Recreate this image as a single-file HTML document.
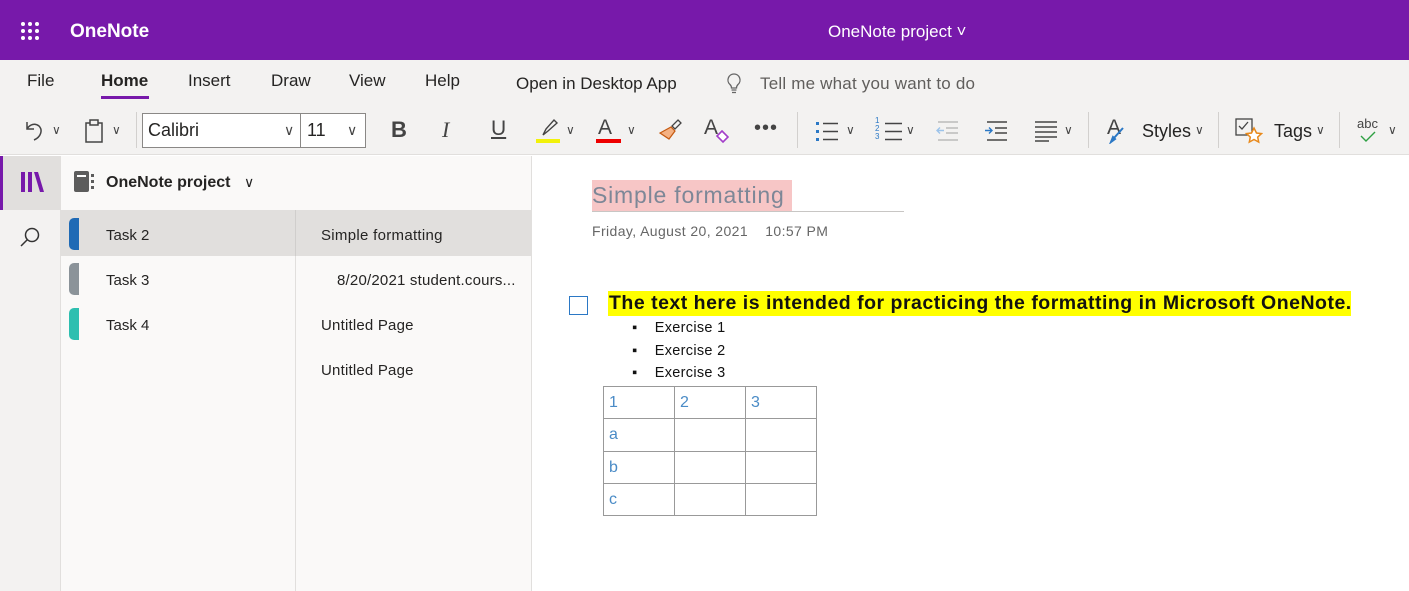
<!DOCTYPE html>
<html><head><meta charset="utf-8"><style>
*{margin:0;padding:0;box-sizing:border-box}
body{width:1409px;height:591px;overflow:hidden;font-family:"Liberation Sans",sans-serif;background:#fff;position:relative;color:#252423}
.a{position:absolute}
#hdr{left:0;top:0;width:1409px;height:60px;background:#7719aa;color:#fff}
#rib{left:0;top:60px;width:1409px;height:95px;background:#f3f2f1;border-bottom:1px solid #e1dfdd}
.tab{position:absolute;top:71px;font-size:17px;color:#252423}
.ic{position:absolute}
.sep{position:absolute;top:112px;width:1px;height:36px;background:#d2d0ce}
.chev{position:absolute;font-size:12px;color:#444}
</style></head><body>
<div id="hdr" class="a">
 <svg class="a" style="left:20px;top:21px" width="20" height="20"><g fill="#fff"><circle cx="3" cy="3" r="2"/><circle cx="10" cy="3" r="2"/><circle cx="17" cy="3" r="2"/><circle cx="3" cy="10" r="2"/><circle cx="10" cy="10" r="2"/><circle cx="17" cy="10" r="2"/><circle cx="3" cy="17" r="2"/><circle cx="10" cy="17" r="2"/><circle cx="17" cy="17" r="2"/></g></svg>
 <div class="a" style="left:70px;top:21px;font-size:19px;font-weight:bold">OneNote</div>
 <div class="a" style="left:828px;top:22px;font-size:17px">OneNote project ˅</div>
</div>
<div id="rib" class="a"></div>
<div class="tab" style="left:27px">File</div>
<div class="tab" style="left:101px;font-weight:bold">Home</div>
<div class="a" style="left:101px;top:96px;width:48px;height:3px;background:#7719aa"></div>
<div class="tab" style="left:188px">Insert</div>
<div class="tab" style="left:271px">Draw</div>
<div class="tab" style="left:349px">View</div>
<div class="tab" style="left:425px">Help</div>
<div class="tab" style="left:516px;top:74px">Open in Desktop App</div>
<svg class="ic" style="left:725px;top:72px" width="18" height="22"><path d="M9 2a6 6 0 0 0-4 10.5c1 1 1.5 2 1.5 3.5h5c0-1.5.5-2.5 1.5-3.5A6 6 0 0 0 9 2zM6.5 18h5M7 20.5h4" fill="none" stroke="#666" stroke-width="1.3"/></svg>
<div class="tab" style="left:760px;top:74px;color:#605e5c;letter-spacing:0.2px">Tell me what you want to do</div>
<svg class="ic" style="left:22px;top:118px" width="26" height="26"><path d="M5 4v7h7M5 11C8 6 13 5 17 8c4 4 2 11-5 14" fill="none" stroke="#444" stroke-width="1.5"/></svg>
<div class="chev" style="left:52px;top:123px">∨</div>
<svg class="ic" style="left:84px;top:118px" width="22" height="26"><rect x="2" y="5" width="16" height="19" fill="none" stroke="#444" stroke-width="1.5"/><rect x="6" y="2" width="8" height="5" fill="#f3f2f1" stroke="#444" stroke-width="1.5"/></svg>
<div class="chev" style="left:112px;top:123px">∨</div>
<div class="sep" style="left:136px"></div>
<div class="a" style="left:142px;top:113px;width:224px;height:35px;background:#fff;border:1px solid #8a8886"></div>
<div class="a" style="left:300px;top:113px;width:1px;height:35px;background:#8a8886"></div>
<div class="a" style="left:148px;top:120px;font-size:18px">Calibri</div>
<div class="chev" style="left:284px;top:122px;font-size:14px">∨</div>
<div class="a" style="left:307px;top:120px;font-size:18px">11</div>
<div class="chev" style="left:347px;top:122px;font-size:14px">∨</div>
<div class="a" style="left:391px;top:117px;font-size:22px;font-weight:bold;color:#444">B</div>
<div class="a" style="left:442px;top:117px;font-size:22px;font-style:italic;font-family:'Liberation Serif';color:#444">I</div>
<div class="a" style="left:491px;top:117px;font-size:21px;text-decoration:underline;color:#444">U</div>
<svg class="ic" style="left:535px;top:116px" width="28" height="28"><path d="M8 19l3-6 8-9 3 3-9 8z" fill="none" stroke="#444" stroke-width="1.4"/><rect x="1" y="23" width="24" height="4" fill="#f2f20a"/></svg>
<div class="chev" style="left:566px;top:123px">∨</div>
<div class="a" style="left:598px;top:116px;font-size:21px;color:#444">A</div>
<div class="a" style="left:596px;top:139px;width:25px;height:4px;background:#e00"></div>
<div class="chev" style="left:627px;top:123px">∨</div>
<svg class="ic" style="left:658px;top:118px" width="26" height="24"><path d="M20 2l3 3-6 6-3-3z" fill="none" stroke="#444" stroke-width="1.3"/><path d="M13 9l4 4-6 8-9-6z" fill="#f4b183" stroke="#c55a11" stroke-width="1.2"/></svg>
<div class="a" style="left:704px;top:116px;font-size:21px;color:#444">A</div>
<svg class="ic" style="left:715px;top:130px" width="14" height="14"><path d="M7 1l6 6-5 5-6-6z" fill="#fff" stroke="#a33ec9" stroke-width="1.6"/></svg>
<div class="a" style="left:754px;top:117px;font-size:20px;color:#444;letter-spacing:1px">•••</div>
<div class="sep" style="left:797px"></div>
<svg class="ic" style="left:815px;top:119px" width="26" height="24"><g fill="#2b78c5"><rect x="1" y="3" width="3" height="3"/><rect x="1" y="11" width="3" height="3"/><rect x="1" y="19" width="3" height="3"/></g><path d="M8 4.5h15M8 12.5h15M8 20.5h15" stroke="#444" stroke-width="1.4"/></svg>
<div class="chev" style="left:846px;top:123px">∨</div>
<div class="a" style="left:875px;top:117px;font-size:8px;line-height:8px;color:#2b78c5">1<br>2<br>3</div>
<svg class="ic" style="left:884px;top:119px" width="20" height="24"><path d="M1 4.5h17M1 12.5h17M1 20.5h17" stroke="#444" stroke-width="1.4"/></svg>
<div class="chev" style="left:906px;top:123px">∨</div>
<svg class="ic" style="left:935px;top:119px" width="26" height="24"><path d="M3 3h20M11 9h12M11 14h12M3 21h20" stroke="#bbb" stroke-width="1.4"/><path d="M9 11.5H2M5 8.5l-3 3 3 3" fill="none" stroke="#9cc3ea" stroke-width="1.4"/></svg>
<svg class="ic" style="left:984px;top:119px" width="26" height="24"><path d="M3 3h20M11 9h12M11 14h12M3 21h20" stroke="#444" stroke-width="1.4"/><path d="M1 11.5h7M5 8.5l3 3-3 3" fill="none" stroke="#2b78c5" stroke-width="1.4"/></svg>
<svg class="ic" style="left:1034px;top:119px" width="26" height="24"><path d="M1 3h22M1 8h22M1 13h22M1 18h22M1 22h14" stroke="#444" stroke-width="1.4"/></svg>
<div class="chev" style="left:1064px;top:123px">∨</div>
<div class="sep" style="left:1088px"></div>
<div class="a" style="left:1107px;top:116px;font-size:21px;color:#444">A</div>
<svg class="ic" style="left:1108px;top:126px" width="18" height="18"><path d="M15 2L6 12M3 16l4-3-2-2z" stroke="#2b78c5" stroke-width="2" fill="#2b78c5"/></svg>
<div class="a" style="left:1142px;top:121px;font-size:18px">Styles</div>
<div class="chev" style="left:1195px;top:123px">∨</div>
<div class="sep" style="left:1218px"></div>
<svg class="ic" style="left:1235px;top:117px" width="28" height="28"><rect x="1" y="2" width="16" height="16" fill="none" stroke="#444" stroke-width="1.3"/><path d="M4 9l3 3 6-7" fill="none" stroke="#444" stroke-width="1.3"/><path d="M19 11l2.5 5 5 .6-3.8 3.5 1 5-4.7-2.6-4.7 2.6 1-5-3.8-3.5 5-.6z" fill="#fff" stroke="#e8891b" stroke-width="1.5"/></svg>
<div class="a" style="left:1274px;top:121px;font-size:18px">Tags</div>
<div class="chev" style="left:1316px;top:123px">∨</div>
<div class="sep" style="left:1339px"></div>
<div class="a" style="left:1357px;top:116px;font-size:13px;color:#444">abc</div>
<svg class="ic" style="left:1360px;top:131px" width="16" height="12"><path d="M1 5l5 5 9-9" fill="none" stroke="#2ea043" stroke-width="1.4"/></svg>
<div class="chev" style="left:1388px;top:123px">∨</div>
<div class="a" style="left:0;top:156px;width:61px;height:435px;background:#f3f2f1;border-right:1px solid #e1dfdd"></div>
<div class="a" style="left:0;top:156px;width:61px;height:54px;background:#e1dfdd"></div>
<div class="a" style="left:0;top:156px;width:3px;height:54px;background:#7719aa"></div>
<svg class="ic" style="left:20px;top:171px" width="26" height="22"><g fill="#7719aa"><rect x="1" y="1" width="4" height="20"/><rect x="8" y="1" width="4" height="20"/><path d="M14 1h4l6 20h-4z"/></g></svg>
<svg class="ic" style="left:18px;top:225px" width="24" height="24"><circle cx="14" cy="10" r="6.5" fill="none" stroke="#333" stroke-width="1.5"/><path d="M9.5 14.5L3 21" stroke="#333" stroke-width="1.5"/></svg>
<div class="a" style="left:61px;top:156px;width:470px;height:435px;background:#faf9f8"></div>
<div class="a" style="left:295px;top:210px;width:1px;height:381px;background:#e1dfdd"></div>
<div class="a" style="left:531px;top:156px;width:1px;height:435px;background:#e1dfdd"></div>
<svg class="ic" style="left:73px;top:170px" width="22" height="24"><rect x="1" y="1" width="15" height="21" rx="2" fill="#5c5c5c"/><rect x="4" y="5" width="9" height="2" fill="#fff"/><g fill="#5c5c5c"><rect x="18" y="4" width="3" height="3"/><rect x="18" y="10" width="3" height="3"/><rect x="18" y="16" width="3" height="3"/></g></svg>
<div class="a" style="left:106px;top:174px;font-size:16px;font-weight:bold">OneNote project</div>
<div class="chev" style="left:244px;top:174px;font-size:14px;color:#222">∨</div>
<div class="a" style="left:61px;top:210px;width:470px;height:46px;background:#e1dfdd"></div>
<div class="a" style="left:295px;top:210px;width:1px;height:46px;background:#d0cecc"></div>
<div class="a" style="left:69px;top:218px;width:10px;height:32px;background:#1f6ab5;border-radius:5px 0 0 5px"></div>
<div class="a" style="left:69px;top:263px;width:10px;height:32px;background:#8b9399;border-radius:5px 0 0 5px"></div>
<div class="a" style="left:69px;top:308px;width:10px;height:32px;background:#2ebfb0;border-radius:5px 0 0 5px"></div>
<div class="a" style="left:106px;top:227px;font-size:15px">Task 2</div>
<div class="a" style="left:106px;top:272px;font-size:15px">Task 3</div>
<div class="a" style="left:106px;top:317px;font-size:15px">Task 4</div>
<div class="a" style="left:321px;top:227px;font-size:15px;letter-spacing:0.3px">Simple formatting</div>
<div class="a" style="left:337px;top:272px;font-size:15px;letter-spacing:0.2px">8/20/2021 student.cours...</div>
<div class="a" style="left:321px;top:317px;font-size:15px;letter-spacing:0.2px">Untitled Page</div>
<div class="a" style="left:321px;top:362px;font-size:15px;letter-spacing:0.2px">Untitled Page</div>
<div class="a" style="left:592px;top:180px;width:200px;height:32px;background:#f7c6c6"></div>
<div class="a" style="left:592px;top:182px;font-size:23px;color:#7d8797;letter-spacing:0.8px">Simple formatting</div>
<div class="a" style="left:592px;top:211px;width:312px;height:1px;background:#c8c6c4"></div>
<div class="a" style="left:592px;top:223px;font-size:14px;color:#666;letter-spacing:0.4px">Friday, August 20, 2021 &nbsp;&nbsp;&nbsp;10:57 PM</div>
<div class="a" style="left:569px;top:296px;width:19px;height:19px;border:1.5px solid #2b78c5"></div>
<div class="a" style="left:608px;top:291px;height:25px;width:743px;background:#ffff00"></div>
<div class="a" style="left:609px;top:292px;font-size:19.5px;font-weight:bold;color:#111;letter-spacing:0.5px;white-space:nowrap">The text here is intended for practicing the formatting in Microsoft OneNote.</div>
<div class="a" style="left:632px;top:317px;font-size:14.5px;line-height:22.5px;color:#111;letter-spacing:0.3px">▪&nbsp;&nbsp;&nbsp;&nbsp;Exercise 1<br>▪&nbsp;&nbsp;&nbsp;&nbsp;Exercise 2<br>▪&nbsp;&nbsp;&nbsp;&nbsp;Exercise 3</div>
<table class="a" style="left:603px;top:386px;border-collapse:collapse;font-size:16px;color:#4a8bc6">
<tr><td style="width:71px;height:32px;border:1px solid #999;padding-left:5px">1</td><td style="width:71px;border:1px solid #999;padding-left:5px">2</td><td style="width:71px;border:1px solid #999;padding-left:5px">3</td></tr>
<tr><td style="height:33px;border:1px solid #999;padding-left:5px">a</td><td style="border:1px solid #999"></td><td style="border:1px solid #999"></td></tr>
<tr><td style="height:32px;border:1px solid #999;padding-left:5px">b</td><td style="border:1px solid #999"></td><td style="border:1px solid #999"></td></tr>
<tr><td style="height:32px;border:1px solid #999;padding-left:5px">c</td><td style="border:1px solid #999"></td><td style="border:1px solid #999"></td></tr>
</table>
</body></html>
